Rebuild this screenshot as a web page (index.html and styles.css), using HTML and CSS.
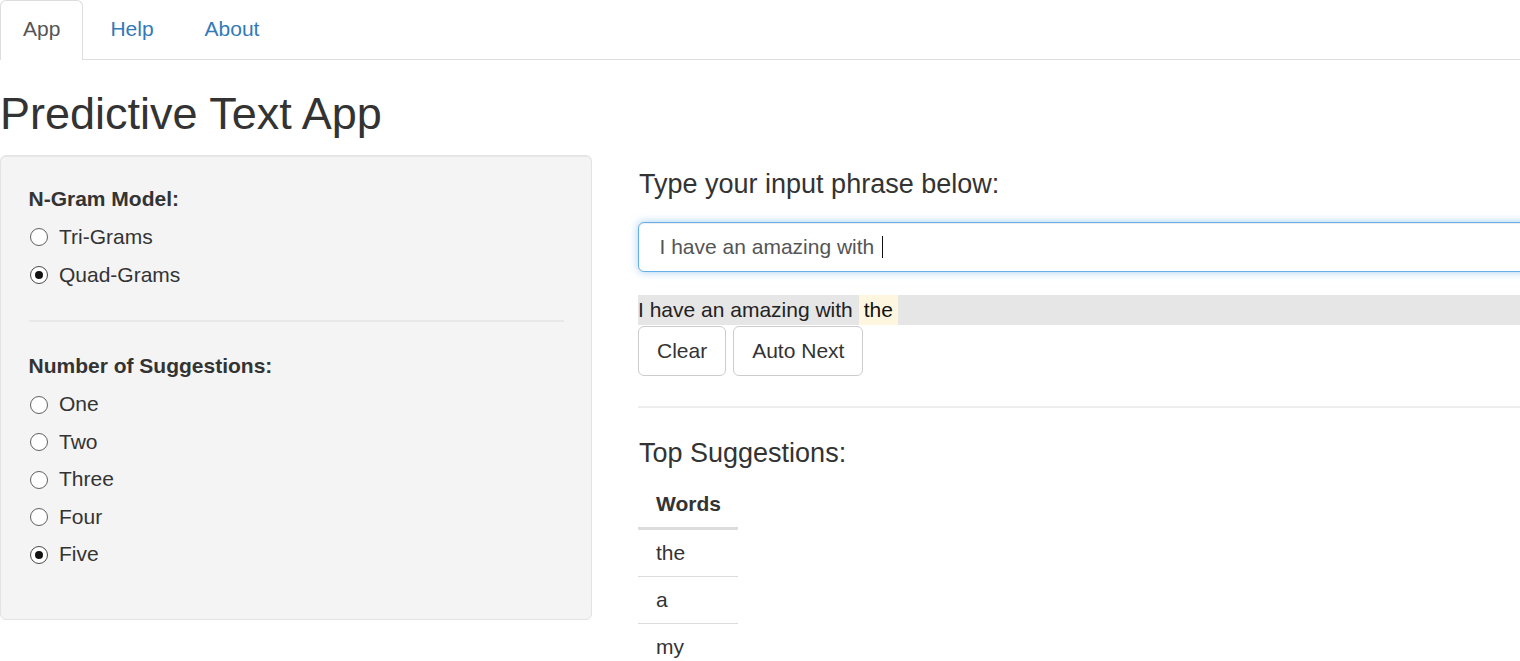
FILE: index.html
```html
<!DOCTYPE html>
<html>
<head>
<meta charset="utf-8">
<title>Predictive Text App</title>
<link rel="stylesheet" href="styles.css">
</head>
<body>
<nav class="tabs">
  <a class="tab active">App</a>
  <a class="tab">Help</a>
  <a class="tab">About</a>
</nav>
<h2 class="title">Predictive Text App</h2>
<div class="row">
  <aside class="well">
    <div class="group">
      <div class="label">N-Gram Model:</div>
      <div class="radios">
        <div class="radio"><span class="dot"></span><span>Tri-Grams</span></div>
        <div class="radio"><span class="dot on"></span><span>Quad-Grams</span></div>
      </div>
    </div>
    <div class="sep"></div>
    <div class="group">
      <div class="label">Number of Suggestions:</div>
      <div class="radios">
        <div class="radio"><span class="dot"></span><span>One</span></div>
        <div class="radio"><span class="dot"></span><span>Two</span></div>
        <div class="radio"><span class="dot"></span><span>Three</span></div>
        <div class="radio"><span class="dot"></span><span>Four</span></div>
        <div class="radio"><span class="dot on"></span><span>Five</span></div>
      </div>
    </div>
  </aside>
  <main class="main">
    <h4 class="heading first">Type your input phrase below:</h4>
    <div class="input"><span>I have an amazing with&nbsp;</span><span class="caret"></span></div>
    <div class="output">I have an amazing with <span class="pred">the</span></div>
    <div class="buttons">
      <button class="btn">Clear</button>
      <button class="btn">Auto Next</button>
    </div>
    <div class="hr"></div>
    <h4 class="heading">Top Suggestions:</h4>
    <table class="table">
      <thead><tr><th>Words</th></tr></thead>
      <tbody>
        <tr><td>the</td></tr>
        <tr><td>a</td></tr>
        <tr><td>my</td></tr>
      </tbody>
    </table>
  </main>
</div>
</body>
</html>
```

FILE: styles.css
```css
html, body {
  margin: 0;
  padding: 0;
}
body {
  width: 1520px;
  height: 661px;
  overflow: hidden;
  background: #fff;
  font-family: "Liberation Sans", Arial, sans-serif;
  font-size: 21px;
  line-height: 28.6px;
  color: #333;
}
.tabs {
  display: flex;
  height: 58.5px;
  border-bottom: 1.5px solid #ddd;
}
.tab {
  display: block;
  height: 59px;
  line-height: 56px;
  padding: 0 23px;
  margin-right: 3px;
  border: 1px solid transparent;
  border-bottom: none;
  border-radius: 6px 6px 0 0;
  color: #337ab7;
  box-sizing: border-box;
}
.tab.active {
  color: #555;
  background: #fff;
  border-color: #ddd;
  border-width: 1.5px;
  border-left-width: 1px;
  height: 60px;
  padding: 0 22px;
}
.title {
  margin: 30px 0 0 0;
  height: 65px;
  font-size: 45px;
  font-weight: normal;
  line-height: 48px;
  color: #333;
}
.row {
  display: flex;
  width: 1600px;
}
.well {
  width: 592px;
  height: 465px;
  box-sizing: border-box;
  padding: 29px 27px 0 27.5px;
  background: #f4f4f4;
  border: 1.5px solid #e3e3e3;
  border-radius: 6px;
  box-shadow: inset 0 1px 1px rgba(0,0,0,0.05);
  flex: none;
}
.label {
  font-weight: bold;
  height: 28.6px;
}
.radios {
  display: flex;
  flex-direction: column;
  gap: 8.9px;
  margin-top: 10px;
}
.radio {
  display: flex;
  align-items: center;
  height: 28.6px;
  padding-left: 1.5px;
}
.dot {
  width: 18px;
  height: 18px;
  box-sizing: border-box;
  border: 1.5px solid #606060;
  border-radius: 50%;
  background: #fff;
  margin-right: 11px;
  display: flex;
  align-items: center;
  justify-content: center;
}
.dot.on {
  border-color: #4a4a4a;
}
.dot.on::after {
  content: "";
  width: 8px;
  height: 8px;
  border-radius: 50%;
  background: #111;
}
.sep {
  height: 1.5px;
  background: #e8e8e8;
  margin: 31px 0 30px;
}
.main {
  margin-left: 46px;
  flex: 1;
}
.heading {
  margin: 0;
  font-size: 27px;
  font-weight: normal;
  line-height: 28.6px;
  padding-left: 1px;
}
.heading.first {
  margin-top: 15px;
}
.input {
  margin-top: 24px;
  height: 50px;
  box-sizing: border-box;
  border: 1.5px solid #66afe9;
  border-radius: 6px;
  box-shadow: inset 0 1px 1px rgba(0,0,0,0.075), 0 0 8px rgba(102,175,233,0.6);
  padding: 0 20.5px;
  display: flex;
  align-items: center;
  color: #555;
  background: #fff;
}
.caret {
  width: 1px;
  height: 22px;
  border-left: 1px solid #111;
  border-top: 1px solid #111;
  box-sizing: border-box;
  margin-left: 2px;
}
.output {
  margin-top: 23px;
  height: 29.5px;
  line-height: 29.5px;
  background: #e6e6e6;
  color: #222;
}
.pred {
  display: inline-block;
  background: #fff6df;
  padding: 0 5px;
  color: #111;
}
.buttons {
  display: flex;
  gap: 7px;
  margin-top: 1.5px;
}
.btn {
  height: 50px;
  padding: 0 18px;
  font-family: inherit;
  font-size: 21px;
  color: #333;
  background: #fff;
  border: 1.5px solid #ccc;
  border-radius: 6px;
}
.hr {
  height: 1.5px;
  background: #eee;
  margin: 30px 0 31px;
}
.table {
  margin-top: 14px;
  border-collapse: collapse;
  width: 100px;
}
.table th, .table td {
  text-align: left;
  padding: 8.5px 17px 8.5px 18px;
  line-height: 28.6px;
  height: 28.6px;
}
.table th {
  border-bottom: 3px solid #ddd;
}
.table td {
  border-bottom: 1.5px solid #ddd;
  padding-top: 9px;
  padding-bottom: 8.5px;
}
```
